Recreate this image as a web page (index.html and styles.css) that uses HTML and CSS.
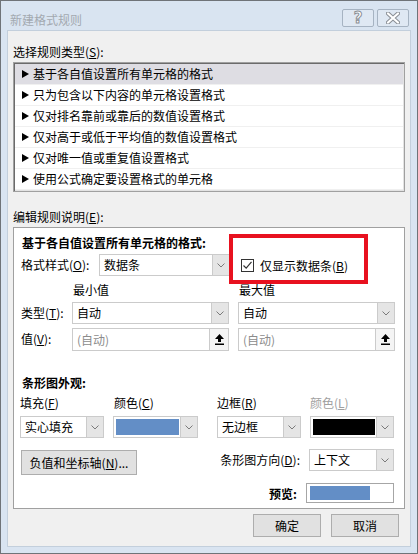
FILE: index.html
```html
<!DOCTYPE html>
<html lang="zh-CN">
<head>
    <meta charset="UTF-8">
    <title>新建格式规则</title>
    <link rel="stylesheet" href="styles.css">
</head>
<body>
    <div class="window">
        <div class="titlebar">
            <div class="title">新建格式规则</div>
            <div class="caption-buttons">
                <div class="cap-btn help">?</div>
                <div class="cap-btn close">
                    <svg width="14" height="12" viewBox="0 0 14 12">
                        <path d="M2 1.5 L12 10.5 M12 1.5 L2 10.5" stroke="#8a8f96" stroke-width="4.2" stroke-linecap="round"/>
                        <path d="M2 1.5 L12 10.5 M12 1.5 L2 10.5" stroke="#fff" stroke-width="2.2" stroke-linecap="round"/>
                    </svg>
                </div>
            </div>
        </div>

        <div class="client">
            <div class="label first">选择规则类型(<u>S</u>):</div>
            <div class="rule-list">
                <div class="rule selected"><span class="tri"></span>基于各自值设置所有单元格的格式</div>
                <div class="rule"><span class="tri"></span>只为包含以下内容的单元格设置格式</div>
                <div class="rule"><span class="tri"></span>仅对排名靠前或靠后的数值设置格式</div>
                <div class="rule"><span class="tri"></span>仅对高于或低于平均值的数值设置格式</div>
                <div class="rule"><span class="tri"></span>仅对唯一值或重复值设置格式</div>
                <div class="rule"><span class="tri"></span>使用公式确定要设置格式的单元格</div>
            </div>

            <div class="label section">编辑规则说明(<u>E</u>):</div>
            <div class="group">
                <div class="group-title">基于各自值设置所有单元格的格式:</div>

                <div class="row format-row">
                    <div class="row-label wide">格式样式(<u>O</u>):</div>
                    <div class="combo format-combo">
                        <span class="combo-text">数据条</span>
                        <span class="arrow"><svg width="8" height="5" viewBox="0 0 8 5"><path d="M0.5 0.5 L4 4 L7.5 0.5" fill="none" stroke="#7a7a7a"/></svg></span>
                    </div>
                    <div class="check-wrap">
                        <span class="checkbox">
                            <svg width="11" height="11" viewBox="0 0 11 11"><path d="M1.5 5.5 L4.2 8.2 L9.5 1.8" fill="none" stroke="#333" stroke-width="1.2"/></svg>
                        </span>
                        <span>仅显示数据条(<u>B</u>)</span>
                    </div>
                </div>
                <div class="highlight"></div>

                <div class="minmax heads">
                    <span></span>
                    <span class="head">最小值</span>
                    <span class="head">最大值</span>
                </div>
                <div class="minmax type-row">
                    <span class="row-label">类型(<u>T</u>):</span>
                    <div class="combo">
                        <span class="combo-text">自动</span>
                        <span class="arrow"><svg width="8" height="5" viewBox="0 0 8 5"><path d="M0.5 0.5 L4 4 L7.5 0.5" fill="none" stroke="#7a7a7a"/></svg></span>
                    </div>
                    <div class="combo">
                        <span class="combo-text">自动</span>
                        <span class="arrow"><svg width="8" height="5" viewBox="0 0 8 5"><path d="M0.5 0.5 L4 4 L7.5 0.5" fill="none" stroke="#7a7a7a"/></svg></span>
                    </div>
                </div>
                <div class="minmax value-row">
                    <span class="row-label">值(<u>V</u>):</span>
                    <div class="input">
                        <span class="placeholder">(自动)</span>
                        <span class="pick"><svg width="9" height="11" viewBox="0 0 9 11"><path d="M4.5 0 L9 5 L6 5 L6 8 L3 8 L3 5 L0 5 Z" fill="#000"/><rect x="0" y="9.5" width="9" height="1.5" fill="#000"/></svg></span>
                    </div>
                    <div class="input">
                        <span class="placeholder">(自动)</span>
                        <span class="pick"><svg width="9" height="11" viewBox="0 0 9 11"><path d="M4.5 0 L9 5 L6 5 L6 8 L3 8 L3 5 L0 5 Z" fill="#000"/><rect x="0" y="9.5" width="9" height="1.5" fill="#000"/></svg></span>
                    </div>
                </div>

                <div class="group-title appearance">条形图外观:</div>
                <div class="bars labels">
                    <span>填充(<u>F</u>)</span>
                    <span>颜色(<u>C</u>)</span>
                    <span>边框(<u>R</u>)</span>
                    <span class="disabled">颜色(<u>L</u>)</span>
                </div>
                <div class="bars combos">
                    <div class="combo">
                        <span class="combo-text">实心填充</span>
                        <span class="arrow"><svg width="8" height="5" viewBox="0 0 8 5"><path d="M0.5 0.5 L4 4 L7.5 0.5" fill="none" stroke="#7a7a7a"/></svg></span>
                    </div>
                    <div class="combo">
                        <span class="swatch blue"></span>
                        <span class="arrow"><svg width="8" height="5" viewBox="0 0 8 5"><path d="M0.5 0.5 L4 4 L7.5 0.5" fill="none" stroke="#7a7a7a"/></svg></span>
                    </div>
                    <div class="combo">
                        <span class="combo-text">无边框</span>
                        <span class="arrow"><svg width="8" height="5" viewBox="0 0 8 5"><path d="M0.5 0.5 L4 4 L7.5 0.5" fill="none" stroke="#7a7a7a"/></svg></span>
                    </div>
                    <div class="combo">
                        <span class="swatch black"></span>
                        <span class="arrow"><svg width="8" height="5" viewBox="0 0 8 5"><path d="M0.5 0.5 L4 4 L7.5 0.5" fill="none" stroke="#7a7a7a"/></svg></span>
                    </div>
                </div>

                <div class="row axis-row">
                    <div class="button axis-btn">负值和坐标轴(<u>N</u>)...</div>
                    <span class="dir-label">条形图方向(<u>D</u>):</span>
                    <div class="combo dir-combo">
                        <span class="combo-text">上下文</span>
                        <span class="arrow"><svg width="8" height="5" viewBox="0 0 8 5"><path d="M0.5 0.5 L4 4 L7.5 0.5" fill="none" stroke="#7a7a7a"/></svg></span>
                    </div>
                </div>

                <div class="row preview-row">
                    <span class="preview-label">预览:</span>
                    <div class="preview"><div class="preview-bar"></div></div>
                </div>
            </div>

            <div class="dialog-buttons">
                <div class="button">确定</div>
                <div class="button">取消</div>
            </div>
        </div>
    </div>
</body>
</html>
```

FILE: styles.css
```css
body {
    margin: 0;
    font-family: "Noto Sans CJK SC", "Noto Sans", sans-serif;
    font-size: 12px;
    color: #000;
}

u {
    text-decoration: underline;
    text-underline-offset: 1px;
}

.window {
    width: 418px;
    height: 554px;
    box-sizing: border-box;
    border: 1px solid #6f7378;
    background: #d9e4f1;
}

/* 标题栏 */
.titlebar {
    display: flex;
    height: 29px;
}

.title {
    padding: 10px 0 0 9px;
    line-height: 18px;
    color: #a3a9b0;
}

.caption-buttons {
    margin-left: auto;
    margin-right: 8px;
    padding-top: 8px;
    display: flex;
    gap: 3px;
}

.cap-btn {
    width: 30px;
    height: 16px;
    border: 1px solid #a6b3c2;
    border-radius: 2px;
    background: #dfe8f3;
    display: flex;
    justify-content: center;
    align-items: center;
}

.help {
    font-family: "DejaVu Sans", sans-serif;
    font-weight: bold;
    font-size: 15px;
    line-height: 16px;
    color: #fff;
    -webkit-text-stroke: 1px #8a8f96;
}

/* 客户区 */
.client {
    margin: 0 6px;
    height: 517px;
    box-sizing: border-box;
    border: 1px solid #c3cfdc;
    background: #f0f0f0;
    padding: 0 5px;
}

.label {
    line-height: 18px;
}

.label.first {
    padding-top: 12px;
    margin-bottom: 1px;
}

.label.section {
    margin-top: 16px;
    margin-bottom: 1px;
}

.rule-list {
    height: 130px;
    box-sizing: border-box;
    border: 1px solid #a0a0a0;
    box-shadow: inset 1px 1px 0 #6b6b6b, inset -1px -1px 0 #e3e3e3;
    background: #fff;
    padding: 1px;
}

.rule {
    height: 20px;
    line-height: 20px;
    border-bottom: 1px solid #f0f0f0;
    padding-left: 7px;
    display: flex;
    align-items: center;
}

.rule.selected {
    background: #dedde3;
}

.tri {
    width: 0;
    height: 0;
    border-top: 4px solid transparent;
    border-bottom: 4px solid transparent;
    border-left: 7px solid #000;
    margin-right: 4px;
}

/* 编辑规则说明 */
.group {
    position: relative;
    height: 282px;
    box-sizing: border-box;
    border: 1px solid #a0a0a0;
    background: #fff;
    padding: 6px 10px 0 7px;
}

.group-title {
    font-weight: bold;
    line-height: 18px;
    padding-left: 1px;
}

.row {
    display: flex;
    align-items: center;
}

.row-label {
    line-height: 22px;
    white-space: nowrap;
}

.row-label.wide {
    width: 78px;
}

.format-row {
    margin-top: 2px;
}

.combo {
    height: 22px;
    box-sizing: border-box;
    border: 1px solid #cbcbcb;
    background: #fff;
    display: flex;
    align-items: center;
}

.combo-text {
    flex: 1;
    padding-left: 4px;
    line-height: 20px;
}

.arrow {
    width: 17px;
    height: 20px;
    box-sizing: border-box;
    border-left: 1px solid #cbcbcb;
    background: #e5e5e5;
    display: flex;
    justify-content: center;
    align-items: center;
    margin-left: auto;
}

.format-combo {
    width: 131px;
}

.check-wrap {
    margin-left: 11px;
    display: flex;
    align-items: center;
    gap: 6px;
}

.checkbox {
    width: 13px;
    height: 13px;
    box-sizing: border-box;
    border: 1px solid #333;
    background: #fff;
    display: flex;
    justify-content: center;
    align-items: center;
}

.highlight {
    position: absolute;
    left: 215px;
    top: 6px;
    width: 139px;
    height: 50px;
    box-sizing: border-box;
    border: 4px solid #e8111f;
}

.minmax {
    display: grid;
    grid-template-columns: 42px 157px 157px;
    column-gap: 9px;
}

.heads {
    margin-top: 5px;
    line-height: 18px;
}

.head {
    padding-left: 1px;
}

.type-row {
    margin-top: 3px;
}

.value-row {
    margin-top: 4px;
}

.input {
    height: 23px;
    box-sizing: border-box;
    border: 1px solid #cbcbcb;
    display: flex;
    align-items: center;
}

.placeholder {
    flex: 1;
    padding-left: 4px;
    color: #8c8c8c;
}

.pick {
    width: 19px;
    height: 21px;
    box-sizing: border-box;
    border-left: 1px solid #cbcbcb;
    background: #f4f4f4;
    display: flex;
    justify-content: center;
    align-items: center;
}

.appearance {
    margin-top: 23px;
}

.bars {
    display: grid;
    grid-template-columns: 84px 94px 103px 93px;
    margin-left: -1px;
}

.bars > :nth-child(2) { margin-left: 9px; }
.bars > :nth-child(3) { margin-left: 19px; }
.bars > :nth-child(4) { margin-left: 9px; }

.labels {
    margin-top: 2px;
    line-height: 18px;
}

.labels span:nth-child(2) {
    padding-left: 1px;
}

.disabled {
    color: #a0a0a0;
}

.combos {
    margin-top: 4px;
}

.swatch {
    height: 16px;
    margin: 0 1px 0 2px;
    flex: 1;
}

.swatch.blue {
    background: #638ec6;
}

.swatch.black {
    background: #000;
}

.button {
    height: 23px;
    box-sizing: border-box;
    border: 1px solid #adadad;
    background: #e1e1e1;
    display: flex;
    justify-content: center;
    align-items: center;
}

.axis-row {
    margin-top: 11px;
    align-items: flex-start;
}

.axis-btn {
    width: 116px;
    height: 25px;
    margin-top: 1px;
}

.dir-label {
    margin-left: auto;
    line-height: 22px;
    margin-right: 9px;
}

.dir-combo {
    width: 85px;
}

.preview-row {
    margin-top: 8px;
    justify-content: flex-end;
}

.preview-label {
    font-weight: bold;
    margin-right: 9px;
}

.preview {
    width: 88px;
    height: 20px;
    box-sizing: border-box;
    border: 1px solid #a6a6a6;
    padding: 2px 3px;
}

.preview-bar {
    width: 60px;
    height: 14px;
    background: #638ec6;
}

.dialog-buttons {
    display: flex;
    justify-content: flex-end;
    gap: 10px;
    margin-top: 5px;
    margin-right: 6px;
}

.dialog-buttons .button {
    width: 68px;
}
```
